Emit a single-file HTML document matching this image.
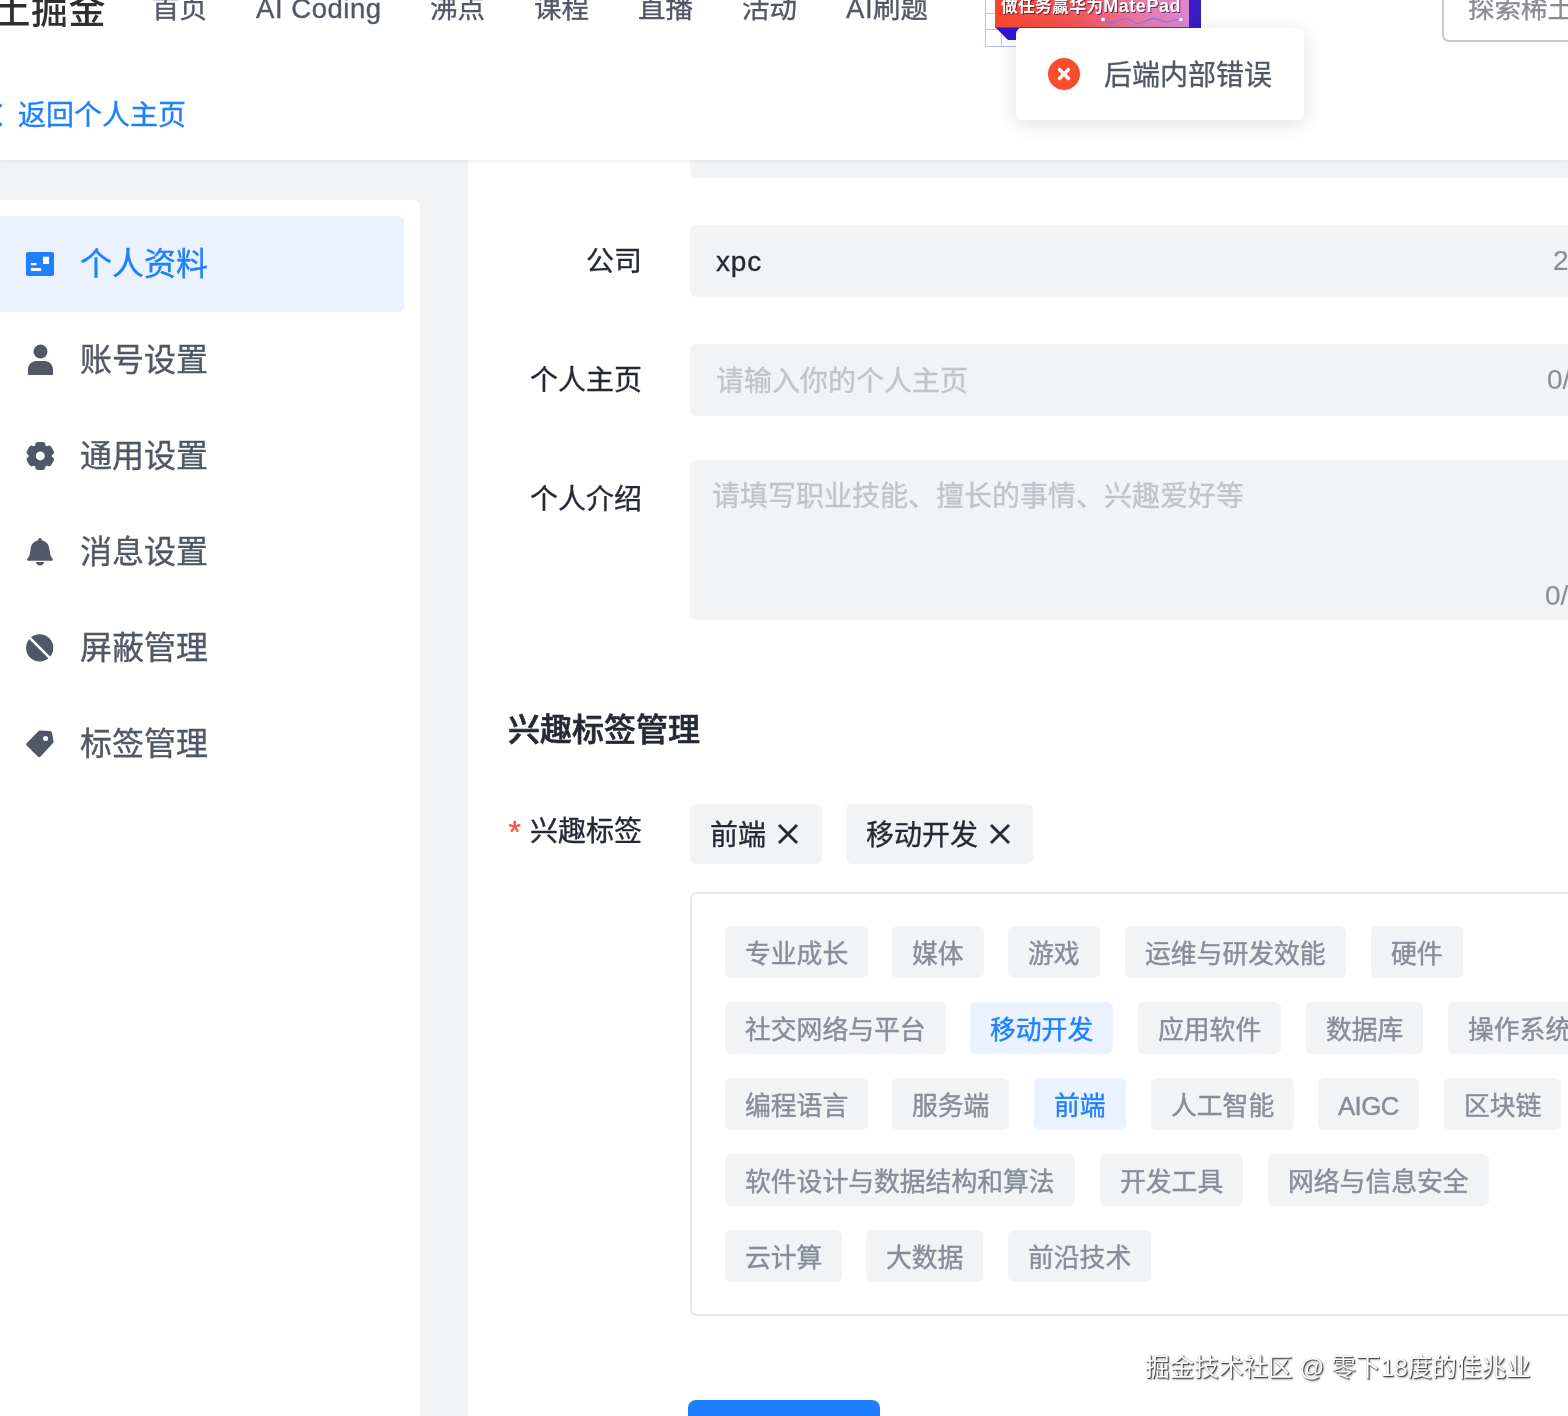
<!DOCTYPE html>
<html lang="zh-CN">
<head>
<meta charset="utf-8">
<title>个人资料 - 稀土掘金</title>
<style>
*{box-sizing:border-box;margin:0;padding:0}
html,body{width:1568px;height:1416px;overflow:hidden;background:#f2f3f5}
body{position:relative;font-family:"Liberation Sans","Noto Sans CJK SC",sans-serif;color:#252933}
#root{position:absolute;left:0;top:0;width:1568px;height:1416px;overflow:hidden;will-change:transform;-webkit-text-stroke:0.35px currentColor}
.abs{position:absolute;white-space:nowrap}
/* header */
#header{left:0;top:0;width:1568px;height:160px;background:#fff;box-shadow:0 2px 4px rgba(0,0,0,.05)}
.logo{left:-44px;top:-18px;font-size:37px;line-height:60px;font-weight:500;color:#2f2f2f;letter-spacing:0.5px;-webkit-text-stroke:0}
.nav{top:-11px;font-size:27.5px;line-height:40px;color:#515767}
.lat{letter-spacing:.55px}
.search{left:1442px;top:-30px;width:200px;height:72px;border:2px solid #c5c8d0;border-radius:7px;background:#fff}
.search span{position:absolute;left:24px;top:17px;font-size:26.500px;line-height:40px;color:#8b8d92}
.back{left:18px;top:96px;font-size:28px;line-height:40px;color:#1e80ff}
/* banner */
.grid{left:985px;top:-3px;width:33px;height:50px;border-left:1px solid #b4c0ff;border-bottom:1px solid #b4c0ff;background:linear-gradient(#b4c0ff,#b4c0ff) 15px 0/1px 100% no-repeat,linear-gradient(#b4c0ff,#b4c0ff) 0 16px/100% 1px no-repeat,linear-gradient(#b4c0ff,#b4c0ff) 0 32px/100% 1px no-repeat}
.bn-side{left:1186px;top:-10px;width:15px;height:38px;background:#3a1cc6}
.bn-fold{left:995px;top:27px;width:24px;height:13px;background:#2c17d4;clip-path:polygon(0 0,100% 0,100% 100%,54% 100%)}
.bn{left:995px;top:-10px;width:194px;height:37.500px;background:linear-gradient(90deg,#fb4428 0%,#f2575c 45%,#e77aa8 75%,#dc86d2 100%);border-bottom:1px solid #c01f2c}
.bn span{position:absolute;left:6px;top:1px;font-size:16.8px;line-height:30px;font-weight:700;color:#fff;letter-spacing:.25px;text-shadow:1px 1px 0 rgba(70,20,60,.8);-webkit-text-stroke:0}
/* toast */
.toast{left:1016px;top:28px;width:288px;height:92px;background:#fff;border-radius:6px;box-shadow:0 4px 20px rgba(0,0,0,.12)}
.toast span{position:absolute;left:88px;top:28px;font-size:28px;line-height:40px;color:#515767}
/* sidebar */
#side{left:-20px;top:200px;width:440px;height:1300px;background:#fff;border-radius:6px}
.item{left:-20px;width:424px;height:96px;border-radius:6px}
.item.on{background:#eaf2ff}
.item span{position:absolute;left:100px;top:24px;font-size:32px;line-height:48px;color:#515767}
.item.on span{color:#1e80ff}
.item svg{position:absolute;left:40px;top:28px;width:40px;height:40px}
/* main */
#main{left:468px;top:160px;width:1200px;height:1300px;background:#fff}
.label{width:200px;text-align:right;font-size:28px;line-height:40px;color:#252933}
.input{left:690px;width:1000px;background:#f2f3f5;border-radius:6px}
.input span{position:absolute;font-size:28px;line-height:40px}
.ph{color:#c0c4cb}
.cnt{color:#898e98;font-size:24.5px;-webkit-text-stroke:0.15px currentColor}
h2{font-size:32px;line-height:48px;font-weight:500;color:#252933;-webkit-text-stroke:0.6px currentColor}
.sel{top:804px;height:60px;background:#f2f3f5;border-radius:6px;font-size:28px;line-height:64px;color:#252933;padding:0 20px}
.panel{left:690px;top:892px;width:1000px;height:424px;border:2px solid #e7e8eb;border-radius:7px;background:#fff}
.tag{height:52px;border-radius:6px;background:#f2f3f5;color:#878d99;-webkit-text-stroke:0.42px currentColor;font-size:25.8px;line-height:56px;padding:0 20px}
.tag.on{background:#eaf2ff;color:#1e80ff}
.btn{left:688px;top:1400px;width:192px;height:72px;border-radius:8px;background:#1e80ff}
.wm{left:1145px;top:1348px;font-size:24.6px;line-height:40px;color:#fff;-webkit-text-stroke:0;text-shadow:1px 1px 1px rgba(0,0,0,.7),1.5px 1.5px 2px rgba(0,0,0,.3),0 0 1px rgba(0,0,0,.3)}
</style>
</head>
<body>
<div id="root">
<div id="main" class="abs"></div>
<div class="abs input" style="top:100px;height:78px"></div>
<div id="header" class="abs"></div>
<div class="abs logo">稀土掘金</div>
<div class="abs nav" style="left:152px">首页</div>
<div class="abs nav lat" style="left:256px">AI Coding</div>
<div class="abs nav" style="left:430px">沸点</div>
<div class="abs nav" style="left:534px">课程</div>
<div class="abs nav" style="left:638px">直播</div>
<div class="abs nav" style="left:742px">活动</div>
<div class="abs nav" style="left:846px"><span class="lat">AI</span>刷题</div>
<div class="abs grid"></div>
<div class="abs bn-side"></div>
<div class="abs bn-fold"></div>
<div class="abs bn"><span>做任务赢华为<b style="font-size:18px;letter-spacing:.55px">MatePad</b></span>
<svg style="position:absolute;left:104px;top:24px" width="86" height="12" viewBox="0 0 86 12"><path d="M5 6c5 4 9 4 14 1s9-4 14 0s9 3 14 0s9-4 14-1s9 2 18-1" stroke="#8d6df2" stroke-width="1.200" fill="none"/><rect x="2" y="3.500" width="4" height="4" fill="#fff" stroke="#8d6df2" stroke-width=".6"/><rect x="80" y="3.500" width="4" height="4" fill="#fff" stroke="#8d6df2" stroke-width=".6"/></svg>
</div>
<div class="abs search"><span>探索稀土掘金</span></div>
<svg class="abs" style="left:-13px;top:100px" width="16" height="30" viewBox="0 0 16 30"><path d="M14.500 4.500L4 15l10.500 10.500" stroke="#1e80ff" stroke-width="2.800" fill="none"/></svg>
<div class="abs back">返回个人主页</div>

<div id="side" class="abs"></div>
<div class="abs item on" style="top:216px"><svg viewBox="0 0 40 40"><rect x="6" y="8" width="28" height="24" rx="1.800" fill="#1e80ff"/><rect x="23" y="12.700" width="6" height="7.300" fill="#fff"/><rect x="10.800" y="19" width="5.700" height="2.200" rx=".4" fill="#fff"/><rect x="10.800" y="24.100" width="10.300" height="2.800" rx=".4" fill="#fff"/></svg><span>个人资料</span></div>
<div class="abs item" style="top:312px"><svg viewBox="0 0 40 40"><circle cx="20.500" cy="11.600" r="7" fill="#515767"/><path d="M8 34V29.600C8 24.800 11.600 21.100 16.400 21.100h8.200c4.800 0 8.400 3.700 8.400 8.500V34c0 .5-.4.900-.9.900H8.900c-.5 0-.9-.4-.9-.9z" fill="#515767"/></svg><span>账号设置</span></div>
<div class="abs item" style="top:408px"><svg viewBox="0 0 40 40"><g fill="#515767" transform="translate(20.300 19.900)"><circle r="11.700"/><rect x="-5" y="-14" width="10" height="28" rx="2.800"/><rect x="-5" y="-14" width="10" height="28" rx="2.800" transform="rotate(60)"/><rect x="-5" y="-14" width="10" height="28" rx="2.800" transform="rotate(120)"/></g><circle cx="20.300" cy="19.900" r="4.500" fill="#fff"/></svg><span>通用设置</span></div>
<div class="abs item" style="top:504px"><svg viewBox="0 0 40 40"><g fill="#515767"><path d="M20 6.100c1 0 1.800.8 1.800 1.800v.4C25.500 9 29.400 12.500 29.400 17.500L30.300 22c0 2 1.200 3.200 2.500 5.300.4.700 0 1.500-.8 1.500H8c-.8 0-1.200-.8-.8-1.500C8.500 25.200 9.700 24 9.700 22l.9-4.500C10.600 12.500 14.500 9 18.200 8.300v-.4c0-1 .8-1.800 1.800-1.800z"/><path d="M16 30h8c0 2.200-1.800 3.600-4 3.600s-4-1.400-4-3.600z"/></g></svg><span>消息设置</span></div>
<div class="abs item" style="top:600px"><svg viewBox="0 0 40 40"><circle cx="19.700" cy="19.900" r="13.600" fill="#515767"/><path d="M8 8.200L31.500 31.700" stroke="#fff" stroke-width="2.600"/></svg><span>屏蔽管理</span></div>
<div class="abs item" style="top:696px"><svg viewBox="0 0 40 40"><path d="M20.100 6.500l9.700.5c1 0 2 .9 2.200 1.900l1.600 8.600c.1.600-.1 1.200-.5 1.600L20.600 32.400c-.8.800-2.100.9-2.900.1L6.900 21.800c-.8-.8-.8-2.100 0-2.900L18.600 7.100c.4-.4.900-.6 1.500-.6z" fill="#515767"/><circle cx="25.600" cy="14.400" r="2.500" fill="#fff"/></svg><span>标签管理</span></div>

<div class="abs label" style="left:442px;top:242px">公司</div>
<div class="abs input" style="top:225px;height:72px"><span style="left:26px;top:17px;color:#252933;letter-spacing:.8px">xpc</span><span class="cnt" style="left:863px;top:16px">2/50</span></div>
<div class="abs label" style="left:442px;top:361px">个人主页</div>
<div class="abs input" style="top:344px;height:72px"><span class="ph" style="left:26px;top:18px">请输入你的个人主页</span><span class="cnt" style="left:857px;top:16px">0/100</span></div>
<div class="abs label" style="left:442px;top:480px">个人介绍</div>
<div class="abs input" style="top:460px;height:160px"><span class="ph" style="left:22px;top:17px">请填写职业技能、擅长的事情、兴趣爱好等</span><span class="cnt" style="left:855px;top:116px">0/100</span></div>
<h2 class="abs" style="left:508px;top:706px">兴趣标签管理</h2>
<div class="abs" style="left:508.500px;top:812px;font-size:32px;line-height:40px;color:#f2553c">*</div>
<div class="abs label" style="left:442px;top:812px">兴趣标签</div>
<div class="abs sel" style="left:690px;width:132px">前端 <svg width="22" height="22" viewBox="0 0 22 22" style="vertical-align:0px;margin-left:3px"><path d="M2 2l18 18M20 2L2 20" stroke="#252933" stroke-width="2.900" fill="none"/></svg></div>
<div class="abs sel" style="left:846px;width:187px">移动开发 <svg width="22" height="22" viewBox="0 0 22 22" style="vertical-align:0px;margin-left:3px"><path d="M2 2l18 18M20 2L2 20" stroke="#252933" stroke-width="2.900" fill="none"/></svg></div>
<div class="abs panel"></div>
<div class="abs tag" style="left:725px;top:926px">专业成长</div>
<div class="abs tag" style="left:892px;top:926px">媒体</div>
<div class="abs tag" style="left:1008px;top:926px">游戏</div>
<div class="abs tag" style="left:1125px;top:926px">运维与研发效能</div>
<div class="abs tag" style="left:1371px;top:926px">硬件</div>
<div class="abs tag" style="left:725px;top:1002px">社交网络与平台</div>
<div class="abs tag on" style="left:970px;top:1002px">移动开发</div>
<div class="abs tag" style="left:1138px;top:1002px">应用软件</div>
<div class="abs tag" style="left:1306px;top:1002px">数据库</div>
<div class="abs tag" style="left:1448px;top:1002px">操作系统</div>
<div class="abs tag" style="left:725px;top:1078px">编程语言</div>
<div class="abs tag" style="left:892px;top:1078px">服务端</div>
<div class="abs tag on" style="left:1034px;top:1078px">前端</div>
<div class="abs tag" style="left:1151px;top:1078px">人工智能</div>
<div class="abs tag" style="left:1318px;top:1078px;letter-spacing:-.6px;padding-right:20.6px">AIGC</div>
<div class="abs tag" style="left:1444px;top:1078px">区块链</div>
<div class="abs tag" style="left:725px;top:1154px">软件设计与数据结构和算法</div>
<div class="abs tag" style="left:1100px;top:1154px">开发工具</div>
<div class="abs tag" style="left:1268px;top:1154px">网络与信息安全</div>
<div class="abs tag" style="left:725px;top:1230px">云计算</div>
<div class="abs tag" style="left:866px;top:1230px">大数据</div>
<div class="abs tag" style="left:1008px;top:1230px">前沿技术</div>
<div class="abs btn"></div>
<div class="abs wm">掘金技术社区 @ 零下18度的佳兆业</div>

<div class="abs toast"><svg style="position:absolute;left:32px;top:30px" width="32" height="32" viewBox="0 0 32 32"><circle cx="16" cy="16" r="16" fill="#f64e2e"/><path d="M11.500 11.500l9 9M20.500 11.500l-9 9" stroke="#fff" stroke-width="3.400" stroke-linecap="round"/></svg><span>后端内部错误</span></div>
</div>
</body>
</html>
